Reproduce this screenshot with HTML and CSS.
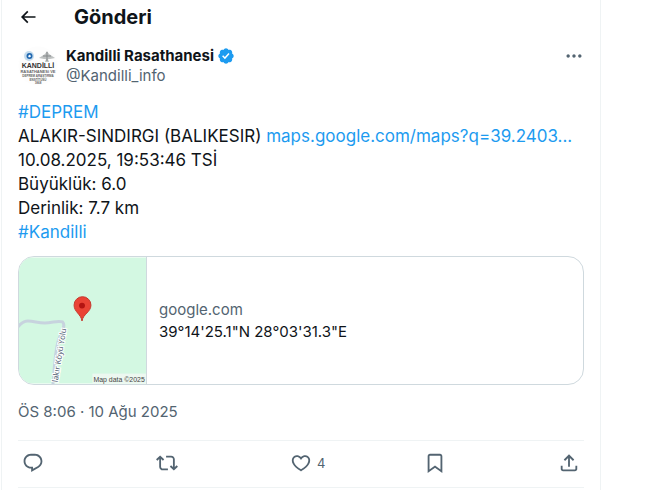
FILE: index.html
```html
<!DOCTYPE html>
<html lang="tr">
<head>
<meta charset="utf-8">
<meta name="viewport" content="width=device-width, initial-scale=1">
<title>Gönderi</title>
<link rel="stylesheet" href="styles.css">
</head>
<body>
<main class="column">
  <header class="topbar">
    <button class="icon-button" type="button" aria-label="Geri">
      <svg class="icon icon-back" viewBox="0 0 24 24"><path d="M7.414 13l5.043 5.04-1.414 1.42L3.586 12l7.457-7.46 1.414 1.42L7.414 11H21v2H7.414z"/></svg>
    </button>
    <h1 class="title">Gönderi</h1>
  </header>

  <article class="post">
    <div class="author">
      <svg class="avatar" viewBox="0 0 40 40" role="img" aria-label="Kandilli Rasathanesi">
        <circle cx="20" cy="20" r="19.5" fill="#fdfdfd"/>
        <circle cx="11" cy="10" r="5" fill="#c5dced"/>
        <circle cx="11.500" cy="10" r="3" fill="#2168b0"/>
        <path d="M10 10l2-1.500 1 2-2 1z" fill="#fff"/>
        <path d="M29 5l2 3 6 4-5 1h-2l1 3h-4l1-3h-2l-5-1 6-4z" fill="#bfc2c2"/>
        <path d="M29 6v9M25 10h8" stroke="#85898b" fill="none"/>
        <text class="logo-name" x="20" y="22" text-anchor="middle">KANDİLLİ</text>
        <text class="logo-line" x="20" y="27" text-anchor="middle">RASATHANESİ VE</text>
        <text class="logo-line logo-small" x="20" y="31" text-anchor="middle">DEPREM ARAŞTIRMA</text>
        <text class="logo-line logo-small" x="20" y="34.500" text-anchor="middle">ENSTİTÜSÜ</text>
        <text class="logo-line logo-small" x="20" y="38" text-anchor="middle">1868</text>
      </svg>
      <div class="names">
        <a class="name" href="#">Kandilli Rasathanesi
          <svg class="verified" viewBox="0 0 22 22" role="img" aria-label="Onaylı hesap"><path d="M20.396 11c-.018-.646-.215-1.275-.57-1.816-.354-.54-.852-.972-1.438-1.246.223-.607.27-1.264.14-1.897-.131-.634-.437-1.218-.882-1.687-.47-.445-1.053-.75-1.687-.882-.633-.13-1.29-.083-1.897.14-.273-.587-.704-1.086-1.245-1.44S11.647 1.62 11 1.604c-.646.017-1.273.213-1.813.568s-.969.854-1.24 1.44c-.608-.223-1.267-.272-1.902-.14-.635.13-1.22.436-1.69.882-.445.47-.749 1.055-.878 1.688-.13.633-.08 1.29.144 1.896-.587.274-1.087.705-1.443 1.245-.356.54-.555 1.17-.574 1.817.02.647.218 1.276.574 1.817.356.54.856.972 1.443 1.245-.224.606-.274 1.263-.144 1.896.13.634.433 1.218.877 1.688.47.443 1.054.747 1.687.878.633.132 1.29.084 1.897-.136.274.586.705 1.084 1.246 1.439.54.354 1.17.551 1.816.569.647-.016 1.276-.213 1.817-.567s.972-.854 1.245-1.44c.604.239 1.266.296 1.903.164.636-.132 1.22-.447 1.68-.907.46-.46.776-1.044.908-1.681s.075-1.299-.165-1.903c.586-.274 1.084-.705 1.439-1.246.354-.54.551-1.17.569-1.816zM9.662 14.85l-3.429-3.428 1.293-1.302 2.072 2.072 4.4-4.794 1.347 1.246z"/></svg>
        </a>
        <a class="handle" href="#">@Kandilli_info</a>
      </div>
      <button class="icon-button" type="button" aria-label="Daha fazla">
        <svg class="icon icon-more" viewBox="0 0 24 24"><path d="M3 12c0-1.1.9-2 2-2s2 .9 2 2-.9 2-2 2-2-.9-2-2zm9 2c1.100 0 2-.9 2-2s-.9-2-2-2-2 .9-2 2 .9 2 2 2zm7 0c1.100 0 2-.9 2-2s-.9-2-2-2-2 .9-2 2 .9 2 2 2z"/></svg>
      </button>
    </div>

    <p class="body"><a href="#">#DEPREM</a><br>
      ALAKIR-SINDIRGI (BALIKESIR) <a href="#">maps.google.com/maps?q=39.2403...</a><br>
      10.08.2025, 19:53:46 TSİ<br>
      Büyüklük: 6.0<br>
      Derinlik: 7.7 km<br>
      <a href="#">#Kandilli</a></p>

    <a class="card" href="#">
      <svg class="map" viewBox="0 0 128 127" role="img" aria-label="Harita">
        <rect width="128" height="127" fill="#d3f8e2"/>
        <path d="M-2 71C2 66 5 64 9 64c6 0 10 2 17 2 8 0 13-3 18-1 3 3 0 9-3 15-5 11-5 30-7 50" fill="none" stroke="#c7d3de" stroke-width="3"/>
        <text class="road" transform="translate(39 126) rotate(-81)">lakır Köyü Yolu</text>
        <path d="M63.500 64c-1-7-8-9-8-16a8.500 8.500 0 0 1 17 0c0 7-8 9-9 16z" fill="#ea4335" stroke="#c5382d"/>
        <circle cx="63.500" cy="48.500" r="3" fill="#b31412"/>
        <rect x="74" y="117" width="54" height="10" fill="#f2f8f4" opacity=".8"/>
        <text class="map-credit" x="75" y="125">Map data ©2025</text>
      </svg>
      <span class="card-text">
        <span class="domain">google.com</span>
        <span>39°14'25.1"N 28°03'31.3"E</span>
      </span>
    </a>

    <a class="date" href="#">ÖS 8:06 · 10 Ağu 2025</a>

    <div class="actions">
      <button class="action" type="button" aria-label="Yanıtla"><svg class="icon" viewBox="0 0 24 24"><path d="M1.751 10c0-4.420 3.584-8 8.005-8h4.366c4.490 0 8.129 3.640 8.129 8.130 0 2.960-1.607 5.680-4.196 7.110l-8.054 4.460v-3.690h-.067c-4.490.1-8.183-3.510-8.183-8.010zm8.005-6c-3.317 0-6.005 2.690-6.005 6 0 3.370 2.770 6.080 6.138 6.010l.351-.01h1.761v2.300l5.087-2.810c1.951-1.080 3.163-3.130 3.163-5.360 0-3.390-2.744-6.130-6.129-6.130H9.756z"/></svg></button>
      <button class="action" type="button" aria-label="Yeniden gönder"><svg class="icon" viewBox="0 0 24 24"><path d="M4.500 3.880l4.432 4.140-1.364 1.460L5.500 7.550V16c0 1.100.896 2 2 2H13v2H7.500c-2.209 0-4-1.790-4-4V7.550L1.432 9.480.068 8.020 4.500 3.880zM16.500 6H11V4h5.500c2.209 0 4 1.790 4 4v8.450l2.068-1.930 1.364 1.460-4.432 4.140-4.432-4.140 1.364-1.460 2.068 1.930V8c0-1.100-.896-2-2-2z"/></svg></button>
      <button class="action" type="button" aria-label="4 beğeni"><svg class="icon" viewBox="0 0 24 24"><path d="M16.697 5.500c-1.222-.06-2.679.51-3.890 2.160l-.805 1.090-.806-1.090C9.984 6.010 8.526 5.440 7.304 5.500c-1.243.07-2.349.78-2.910 1.910-.552 1.120-.633 2.780.479 4.820 1.074 1.970 3.257 4.270 7.129 6.610 3.870-2.340 6.052-4.640 7.126-6.610 1.111-2.040 1.030-3.700.477-4.820-.561-1.130-1.666-1.840-2.908-1.910zm4.187 7.690c-1.351 2.480-4.001 5.120-8.379 7.670l-.503.3-.504-.3c-4.379-2.550-7.029-5.190-8.382-7.670-1.360-2.500-1.410-4.860-.514-6.670.887-1.790 2.647-2.910 4.601-3.010 1.651-.09 3.368.56 4.798 2.010 1.429-1.450 3.146-2.100 4.796-2.010 1.954.1 3.714 1.220 4.601 3.010.896 1.810.846 4.170-.514 6.670z"/></svg><span>4</span></button>
      <button class="action" type="button" aria-label="Yer işareti"><svg class="icon" viewBox="0 0 24 24"><path d="M4 4.500C4 3.120 5.119 2 6.500 2h11C18.881 2 20 3.120 20 4.500v18.440l-8-5.710-8 5.710V4.500zM6.500 4c-.276 0-.5.22-.5.5v14.560l6-4.290 6 4.290V4.500c0-.28-.224-.5-.5-.5h-11z"/></svg></button>
      <button class="action" type="button" aria-label="Paylaş"><svg class="icon" viewBox="0 0 24 24"><path d="M12 2.590l5.700 5.700-1.410 1.420L13 6.410V16h-2V6.410l-3.300 3.300-1.410-1.420L12 2.590zM21 15l-.02 3.510c0 1.380-1.120 2.490-2.500 2.490H5.500C4.110 21 3 19.880 3 18.500V15h2v3.500c0 .28.22.5.5.5h12.980c.28 0 .5-.22.5-.5L19 15h2z"/></svg></button>
    </div>
  </article>
</main>
</body>
</html>
```
FILE: styles.css
```css
* { box-sizing: border-box; }

body {
  margin: 0;
  background: #fff;
  color: #0f1419;
  font-family: Inter, "Liberation Sans", sans-serif;
  font-size: 15px;
  line-height: 20px;
}

a { color: #1d9bf0; text-decoration: none; }

button {
  padding: 0;
  border: 0;
  background: none;
  font: inherit;
  color: #536471;
  cursor: pointer;
}

.column {
  max-width: 600px;
  min-height: 100vh;
  margin-left: 1px;
  padding: 0 16px;
  border: solid #eff3f4;
  border-width: 0 1px;
}

.topbar {
  display: flex;
  align-items: center;
  gap: 36px;
  height: 34px;
}

.title {
  margin: 0;
  font-size: 20px;
  line-height: 24px;
  font-weight: 700;
}

.icon-button { display: flex; }

.icon {
  display: block;
  flex: none;
  width: 22px;
  height: 22px;
  fill: currentColor;
}

.icon-back { width: 20px; height: 20px; color: #0f1419; }
.icon-more { width: 20px; height: 20px; }

.author {
  display: flex;
  gap: 8px;
  padding-top: 12px;
}

.avatar { flex: none; width: 40px; height: 40px; }
.logo-name { font: 700 7px "Liberation Sans", sans-serif; fill: #333; }
.logo-line { font: 700 4px "Liberation Sans", sans-serif; fill: #666; }
.logo-small { font-size: 3px; }

.names { display: flex; flex: 1; flex-direction: column; }
.author .icon-button { align-self: flex-start; }

.name {
  display: flex;
  align-items: center;
  gap: 3px;
  color: #0f1419;
  font-weight: 700;
}

.verified { width: 18px; height: 18px; fill: #1d9bf0; }

.handle, .domain, .date { color: #536471; }

.body {
  margin: 14px 0 12px;
  font-size: 17px;
  line-height: 24px;
}

.card {
  display: flex;
  overflow: hidden;
  border: 1px solid #cfd9de;
  border-radius: 16px;
  color: #0f1419;
}

.map {
  flex: none;
  width: 128px;
  height: 127px;
  border-right: 1px solid #cfd9de;
}

.road {
  font: 8px "Open Sans", sans-serif;
  fill: #3e5068;
  stroke: #fff;
  stroke-width: 2px;
  paint-order: stroke;
}

.map-credit { font: 7px "Liberation Sans", sans-serif; fill: #444; }

.card-text {
  display: flex;
  flex-direction: column;
  justify-content: center;
  gap: 2px;
  padding: 0 12px;
}

.date { display: block; margin: 17px 0 18px; }

.actions {
  display: flex;
  align-items: center;
  justify-content: space-between;
  height: 48px;
  padding: 0 4px 2px;
  border: solid #eff3f4;
  border-width: 1px 0;
}

.action {
  display: flex;
  align-items: center;
  gap: 5px;
  width: 22px;
  font-size: 13px;
}
```
